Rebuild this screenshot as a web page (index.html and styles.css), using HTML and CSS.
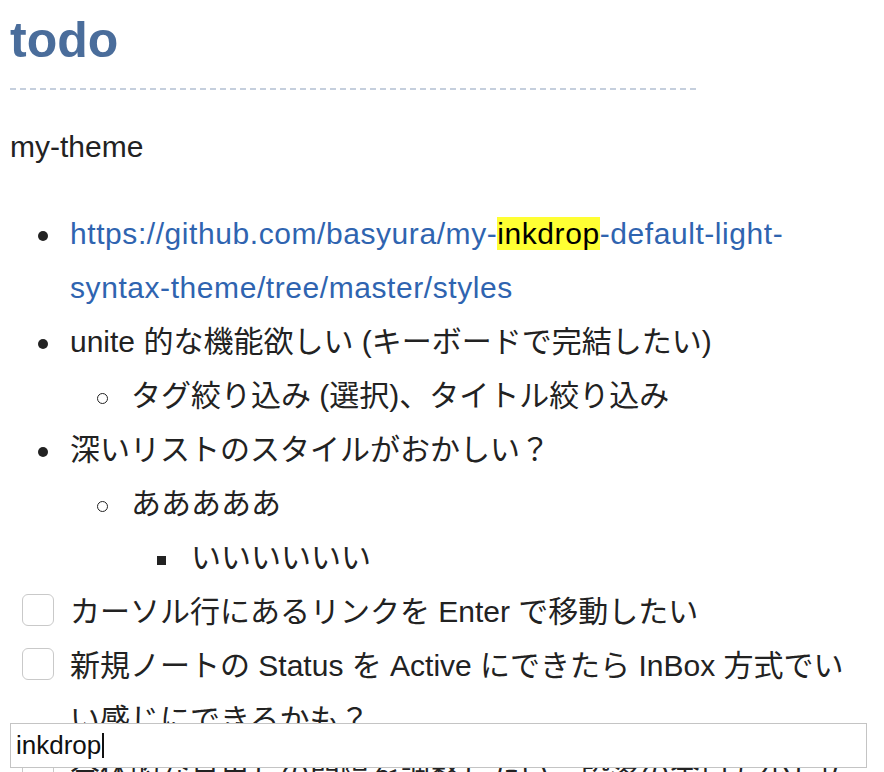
FILE: index.html
```html
<!DOCTYPE html>
<html lang="ja">
<head>
<meta charset="utf-8">
<title>todo</title>
<link rel="stylesheet" href="styles.css">
</head>
<body>
<main class="note">
  <h1 class="note-title">todo</h1>
  <p class="para">my-theme</p>
  <ul class="list">
    <li class="item"><a class="link" href="#">https://github.com/basyura/my-<mark class="hit">inkdrop</mark>-default-light-syntax-theme/tree/master/styles</a></li>
    <li class="item">unite 的な機能欲しい (キーボードで完結したい)
      <ul class="list sub">
        <li class="item circle">タグ絞り込み (選択)、タイトル絞り込み</li>
      </ul>
    </li>
    <li class="item">深いリストのスタイルがおかしい？
      <ul class="list sub">
        <li class="item circle">あああああ
          <ul class="list subsub">
            <li class="item square">いいいいいい</li>
          </ul>
        </li>
      </ul>
    </li>
    <li class="task"><span class="check"></span>カーソル行にあるリンクを Enter で移動したい</li>
    <li class="task"><span class="check"></span>新規ノートの Status を Active にできたら InBox 方式でいい感じにできるかも？</li>
    <li class="task"><span class="check"></span>全体的な見出しの間隔を調整したい、段落の余白も少し広げたい</li>
  </ul>
</main>
<div class="search-box"><span class="search-text">inkdrop</span><span class="caret"></span></div>
</body>
</html>
```

FILE: styles.css
```css
html {
  overflow: hidden;
}
body {
  margin: 0;
  background: #ffffff;
  color: #222222;
  font-family: "Liberation Sans", "Noto Sans CJK JP", sans-serif;
}
.note {
  padding: 0 18px 0 10px;
  font-size: 30px;
  line-height: 54px;
}
.note-title {
  margin: 10px 0 30px;
  width: 686px;
  font-size: 50px;
  line-height: 60px;
  font-weight: bold;
  color: #4a6d9b;
  background-image: repeating-linear-gradient(to right, #c5cfdd 0 6px, transparent 6px 10px);
  background-size: 100% 2px;
  background-position: left bottom;
  background-repeat: no-repeat;
  padding-bottom: 20px;
}
.para {
  margin: 0 0 33px;
}
.list {
  margin: 0;
  padding-left: 60px;
  list-style: none;
}
.list.sub {
  padding-left: 61px;
}
.item::before {
  content: "";
  display: inline-block;
  box-sizing: border-box;
  width: 10px;
  height: 10px;
  margin: 0 22px 0 -32px;
  border-radius: 50%;
  background: #222222;
  vertical-align: middle;
}
.item.circle::before {
  width: 11px;
  height: 11px;
  margin: 0 23px 0 -34px;
  background: transparent;
  border: 1.5px solid #222222;
}
.item.square::before {
  width: 9px;
  height: 9px;
  margin: 0 25px 0 -34px;
  border-radius: 0;
}
.link {
  color: #2f64b0;
  text-decoration: none;
  letter-spacing: 0.57px;
}
.hit {
  background: #ffff33;
  color: #000000;
}
.task {
  list-style: none;
}
.check {
  display: inline-block;
  box-sizing: border-box;
  width: 32px;
  height: 32px;
  margin: 9px 16px 0 -48px;
  vertical-align: top;
  border: 1.5px solid #c9c9c9;
  border-radius: 6px;
  background: #ffffff;
}
.search-box {
  position: fixed;
  left: 10px;
  top: 723px;
  width: 857px;
  height: 45px;
  box-sizing: border-box;
  border: 1px solid #c4c4c4;
  background: #ffffff;
  padding: 0 5px;
  display: flex;
  align-items: center;
  font-family: "Liberation Sans", sans-serif;
  font-size: 26px;
  color: #111111;
}
.caret {
  display: inline-block;
  width: 2px;
  height: 25px;
  margin-left: 1px;
  background: #111111;
}
```
